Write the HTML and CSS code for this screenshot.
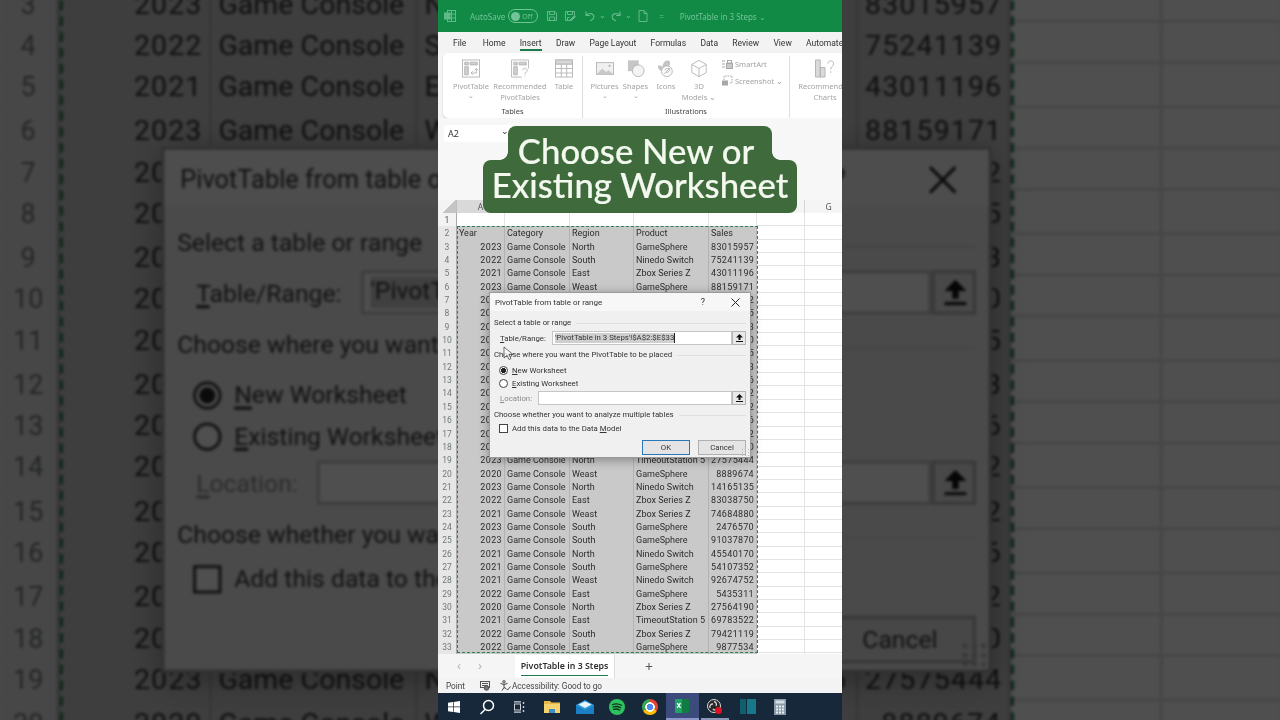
FILE: index.html
```html
<!DOCTYPE html>
<html lang="en">
<head>
  <meta charset="UTF-8">
  <title>PivotTable in 3 Steps</title>
  <link rel="stylesheet" href="styles.css">
  <script src="script.js" defer></script>
</head>
<body>
  <!-- zoomed, darkened copy of the window, filled in by script.js -->
  <div class="backdrop" aria-hidden="true"></div>

  <div class="stage">
    <div class="excel">
      <!-- title bar -->
      <div class="titlebar">
        <svg class="tb-logo" width="14" height="14" viewBox="0 0 14 14" fill="none" stroke="#62b98a"><rect x="4.5" y="1.5" width="8" height="11"/><path d="M4.5 5h8M4.5 9h8M8.500 1.500v11"/><rect x="1" y="3.500" width="6.500" height="7" fill="#62b98a" stroke="none"/></svg>
        <span class="autosave">AutoSave</span>
        <span class="toggle"><i></i>Off</span>
        <svg class="tb-save" width="12" height="12" viewBox="0 0 12 12" fill="none" stroke="#62b98a"><path d="M1.500 1.500h7.500l1.500 1.500v7.500h-9z"/><path d="M3.500 1.500v3h5v-3M3.500 10.500v-3.500h5v3.500"/></svg>
        <svg class="tb-saveas" width="12" height="12" viewBox="0 0 12 12" fill="none" stroke="#62b98a"><path d="M1.500 1.500h9v5l-4 4h-5z"/><path d="M3.500 1.500v3h5v-3M3.500 10.500v-3h2M6 10l4.500-4.500 1 1-4 4z"/></svg>
        <svg class="tb-undo" width="12" height="12" viewBox="0 0 12 12" fill="none" stroke="#62b98a" stroke-width="1.200"><path d="M2 1.500v4h4M2.300 5.300c2-2.800 7.500-2.300 7.500 1.500 0 2-1.500 3.200-3.800 4"/></svg>
        <span class="tb-caret">⌄</span>
        <svg class="tb-redo" width="12" height="12" viewBox="0 0 12 12" fill="none" stroke="#62b98a" stroke-width="1.200"><path d="M10 1.500v4h-4M9.700 5.300c-2-2.800-7.500-2.300-7.500 1.500 0 2 1.500 3.200 3.800 4"/></svg>
        <span class="tb-caret">⌄</span>
        <svg class="tb-new" width="10" height="12" viewBox="0 0 10 12" fill="none" stroke="#62b98a"><path d="M1 .5h5l3 3v8h-8zM6 .5v3h3"/></svg>
        <span class="tb-more">=</span>
        <span class="docname">PivotTable in 3 Steps ⌄</span>
      </div>

      <!-- ribbon tabs -->
      <nav class="tabs">
        <span class="tab-file">File</span><span>Home</span><span class="tab-on">Insert</span><span>Draw</span><span>Page Layout</span><span>Formulas</span><span>Data</span><span>Review</span><span>View</span><span>Automate</span>
      </nav>

      <!-- ribbon -->
      <div class="ribbon">
        <div class="rb-group rb-tables">
          <div class="rb-items">
            <div class="rb-item w56">
              <svg width="18" height="19" viewBox="0 0 20 20" fill="none" stroke="#b4b4b4"><rect x=".5" y=".5" width="19" height="19"/><path d="M3 3h4v3H3zM9 3h8v3H9zM3 8h4v9H3z" fill="#cfcfcf"/><path d="M10 15h6v-5M14 12l2-2 2 2M12 13l-2 2 2 2"/></svg>
              <span>PivotTable</span><span class="rb-down">⌄</span>
            </div>
            <div class="rb-item w42">
              <svg width="18" height="19" viewBox="0 0 20 20" fill="none" stroke="#b4b4b4"><path d="M19.500 10V.5H.5v19H12"/><path d="M3 3h4v3H3zM9 3h8v3H9zM3 8h4v9H3z" fill="#cfcfcf"/><path d="M13 12c0-3 5-3 5 0 0 2-2.500 2-2.500 4.500M15.500 18v1"/></svg>
              <span>Recommended</span><span>PivotTables</span>
            </div>
            <div class="rb-item w46">
              <svg width="18" height="19" viewBox="0 0 20 20" fill="none" stroke="#b4b4b4"><rect x=".5" y=".5" width="19" height="19"/><path d="M.5 5h19M.5 10h19M.5 15h19M7 .5v19M13 .5v19"/><path d="M.5.5h19V5H.5z" fill="#d6d6d6"/></svg>
              <span>Table</span>
            </div>
          </div>
          <div class="rb-label">Tables</div>
        </div>
        <div class="rb-group rb-illus">
          <div class="rb-items">
            <div class="rb-item w31">
              <svg width="18" height="19" viewBox="0 0 20 20" fill="none" stroke="#b4b4b4"><rect x=".5" y="3.500" width="19" height="13" fill="#f0f0f0"/><path d="M1 16l6-6 4 4 3-2 5 4z" fill="#c9c9c9" stroke="none"/><circle cx="15" cy="7" r="1.200" fill="#b4b4b4" stroke="none"/></svg>
              <span>Pictures</span><span class="rb-down">⌄</span>
            </div>
            <div class="rb-item w31">
              <svg width="18" height="19" viewBox="0 0 20 20"><rect x="1" y="1" width="12" height="12" fill="#c6c6c6"/><circle cx="12.500" cy="12.500" r="6.500" fill="#f4f4f4" stroke="#b4b4b4"/></svg>
              <span>Shapes</span><span class="rb-down">⌄</span>
            </div>
            <div class="rb-item w28">
              <svg width="18" height="19" viewBox="0 0 20 20"><path d="M1 7c2-1 4 0 5 1 1-4 2-7 6-7 3 0 3 3 2 5-1 2-1 3 2 3-3 2-5 4-9 4-4 0-6-2-6-6z" fill="#c4c4c4"/><circle cx="11" cy="13" r="6" fill="#fafafa" stroke="#b4b4b4"/><path d="M8 16l6-6M9 12c0-2 2-2 5-2 0 3-1 5-4 4" fill="none" stroke="#b4b4b4"/></svg>
              <span>Icons</span>
            </div>
            <div class="rb-item w38">
              <svg width="18" height="19" viewBox="0 0 20 20" fill="none" stroke="#b4b4b4"><path d="M10 1l8 4.500v9L10 19l-8-4.500v-9zM2 5.500l8 4.500 8-4.500M10 10v9"/></svg>
              <span>3D</span><span>Models ⌄</span>
            </div>
            <div class="rb-side">
              <span class="rb-line"><svg width="11" height="9" viewBox="0 0 11 9" fill="none" stroke="#a8a8a8"><path d="M0 1h3M0 4h3M0 7h3"/><rect x="4.500" y="3.500" width="6" height="5" fill="#c9c9c9"/><rect x="5.500" y=".5" width="4" height="2.500"/></svg>SmartArt</span>
              <span class="rb-line"><svg width="11" height="11" viewBox="0 0 11 11" fill="none" stroke="#a8a8a8"><path d="M2 5V1h8v7H8" stroke-dasharray="1.500 1"/><rect x=".5" y="6" width="5" height="4" fill="#a8a8a8"/></svg>Screenshot ⌄</span>
            </div>
          </div>
          <div class="rb-label">Illustrations</div>
        </div>
        <div class="rb-group rb-charts">
          <div class="rb-items">
            <div class="rb-item w60">
              <svg width="22" height="19" viewBox="0 0 22 20" fill="none" stroke="#b4b4b4"><path d="M1 1h5v18H1zM6 9h5v10H6z" fill="#dadada"/><path d="M14 5c0-4 6-4 6 0 0 3-3 3-3 6M17 13v1.500"/></svg>
              <span>Recommended</span><span>Charts</span>
            </div>
          </div>
        </div>
      </div>

      <!-- name box -->
      <div class="formula">
        <div class="namebox">A2<span>⌄</span></div>
      </div>

      <!-- sheet -->
      <div class="colheads">
        <span class="corner"></span><span>A</span><span>B</span><span>C</span><span>D</span><span>E</span><span class="col-off"></span><span class="col-off">G</span>
      </div>
      <div class="sheet">
        <div class="row row-blank"><b>1</b><span></span><span></span><span></span><span></span><span></span></div>
        <div class="row"><b>2</b><span>Year</span><span>Category</span><span>Region</span><span>Product</span><span>Sales</span></div>
        <div class="row"><b>3</b><span class="num">2023</span><span>Game Console</span><span>North</span><span>GameSphere</span><span class="num">83015957</span></div>
        <div class="row"><b>4</b><span class="num">2022</span><span>Game Console</span><span>South</span><span>Ninedo Switch</span><span class="num">75241139</span></div>
        <div class="row"><b>5</b><span class="num">2021</span><span>Game Console</span><span>East</span><span>Zbox Series Z</span><span class="num">43011196</span></div>
        <div class="row"><b>6</b><span class="num">2023</span><span>Game Console</span><span>Weast</span><span>GameSphere</span><span class="num">88159171</span></div>
        <div class="row"><b>7</b><span class="num">2021</span><span>Game Console</span><span>North</span><span>GameSphere</span><span class="num">61320472</span></div>
        <div class="row"><b>8</b><span class="num">2022</span><span>Game Console</span><span>East</span><span>Zbox Series Z</span><span class="num">39471825</span></div>
        <div class="row"><b>9</b><span class="num">2020</span><span>Game Console</span><span>South</span><span>Ninedo Switch</span><span class="num">50218463</span></div>
        <div class="row"><b>10</b><span class="num">2023</span><span>Game Console</span><span>Weast</span><span>GameSphere</span><span class="num">72660310</span></div>
        <div class="row"><b>11</b><span class="num">2021</span><span>Game Console</span><span>East</span><span>Zbox Series Z</span><span class="num">18835275</span></div>
        <div class="row"><b>12</b><span class="num">2022</span><span>Game Console</span><span>North</span><span>Ninedo Switch</span><span class="num">64120983</span></div>
        <div class="row"><b>13</b><span class="num">2020</span><span>Game Console</span><span>South</span><span>GameSphere</span><span class="num">29574416</span></div>
        <div class="row"><b>14</b><span class="num">2023</span><span>Game Console</span><span>East</span><span>Zbox Series Z</span><span class="num">83301752</span></div>
        <div class="row"><b>15</b><span class="num">2021</span><span>Game Console</span><span>Weast</span><span>GameSphere</span><span class="num">47096132</span></div>
        <div class="row"><b>16</b><span class="num">2022</span><span>Game Console</span><span>North</span><span>Ninedo Switch</span><span class="num">35718846</span></div>
        <div class="row"><b>17</b><span class="num">2020</span><span>Game Console</span><span>South</span><span>GameSphere</span><span class="num">90246612</span></div>
        <div class="row"><b>18</b><span class="num">2021</span><span>Game Console</span><span>East</span><span>Zbox Series Z</span><span class="num">56831470</span></div>
        <div class="row"><b>19</b><span class="num">2023</span><span>Game Console</span><span>North</span><span>TimeoutStation 5</span><span class="num">27575444</span></div>
        <div class="row"><b>20</b><span class="num">2020</span><span>Game Console</span><span>Weast</span><span>GameSphere</span><span class="num">8889674</span></div>
        <div class="row"><b>21</b><span class="num">2023</span><span>Game Console</span><span>North</span><span>Ninedo Switch</span><span class="num">14165135</span></div>
        <div class="row"><b>22</b><span class="num">2022</span><span>Game Console</span><span>East</span><span>Zbox Series Z</span><span class="num">83038750</span></div>
        <div class="row"><b>23</b><span class="num">2021</span><span>Game Console</span><span>Weast</span><span>Zbox Series Z</span><span class="num">74684880</span></div>
        <div class="row"><b>24</b><span class="num">2023</span><span>Game Console</span><span>South</span><span>GameSphere</span><span class="num">2476570</span></div>
        <div class="row"><b>25</b><span class="num">2023</span><span>Game Console</span><span>South</span><span>GameSphere</span><span class="num">91037870</span></div>
        <div class="row"><b>26</b><span class="num">2021</span><span>Game Console</span><span>North</span><span>Ninedo Switch</span><span class="num">45540170</span></div>
        <div class="row"><b>27</b><span class="num">2021</span><span>Game Console</span><span>South</span><span>GameSphere</span><span class="num">54107352</span></div>
        <div class="row"><b>28</b><span class="num">2021</span><span>Game Console</span><span>Weast</span><span>Ninedo Switch</span><span class="num">92674752</span></div>
        <div class="row"><b>29</b><span class="num">2022</span><span>Game Console</span><span>East</span><span>GameSphere</span><span class="num">5435311</span></div>
        <div class="row"><b>30</b><span class="num">2020</span><span>Game Console</span><span>North</span><span>Zbox Series Z</span><span class="num">27564190</span></div>
        <div class="row"><b>31</b><span class="num">2021</span><span>Game Console</span><span>East</span><span>TimeoutStation 5</span><span class="num">69783522</span></div>
        <div class="row"><b>32</b><span class="num">2022</span><span>Game Console</span><span>South</span><span>Zbox Series Z</span><span class="num">79421119</span></div>
        <div class="row"><b>33</b><span class="num">2022</span><span>Game Console</span><span>East</span><span>GameSphere</span><span class="num">9877534</span></div>
        <div class="ants"></div>
      </div>

      <!-- sheet tabs and status -->
      <div class="sheetbar">
        <span class="arrow arrow-l">‹</span><span class="arrow arrow-r">›</span>
        <div class="sheet-tab"><span>PivotTable in 3 Steps</span></div>
        <span class="plus">+</span>
      </div>
      <div class="status">
        <span class="status-mode">Point</span>
        <svg class="status-macro" width="10" height="10" viewBox="0 0 10 10" fill="none" stroke="#555"><rect x=".5" y=".5" width="9" height="6"/><path d="M2 2.500h6M2 4.500h6"/><circle cx="6.500" cy="7" r="2.300" fill="#777"/></svg>
        <svg class="status-acc" width="11" height="11" viewBox="0 0 11 11" fill="none" stroke="#444"><circle cx="4" cy="1.800" r="1.200"/><path d="M.5 3.500l3.500 1 3.500-1M4 4.500v3l-2 3M4 7.500l2 1"/><path d="M6 8.500l1.500 1.500 3-3.500"/></svg>
        <span>Accessibility: Good to go</span>
      </div>

      <!-- windows taskbar -->
      <div class="taskbar">
        <span class="task"><svg width="12" height="12" viewBox="0 0 12 12" fill="#fff"><path d="M0 1.700l5-.7v4.600H0zM5.700.9L12 0v5.600H5.700zM0 6.300h5v4.700l-5-.7zM5.700 6.300H12V12l-6.300-.9z"/></svg></span>
        <span class="task"><svg width="16" height="16" viewBox="0 0 16 16" fill="none" stroke="#fff" stroke-width="1.500"><circle cx="9.500" cy="6.500" r="5"/><path d="M6 10.500L1.500 15"/></svg></span>
        <span class="task"><svg width="12" height="12" viewBox="0 0 12 12" fill="none" stroke="#c9d0d6"><rect x="1.500" y="3" width="6" height="6"/><path d="M1 .8h7M1 11.200h7" stroke-width="1.200"/><path d="M10.500 1v2M10.500 5v2M10.500 9v2" stroke-width="1.400"/></svg></span>
        <span class="task"><svg width="16" height="14" viewBox="0 0 16 14"><path d="M0 1h6l1.500 1.500H16V13H0z" fill="#e8b84b"/><rect y="4" width="16" height="9" fill="#f4d36f"/><rect x="5" y="9" width="6" height="4" fill="#3e8fc9"/></svg></span>
        <span class="task"><svg width="18" height="14" viewBox="0 0 18 14"><path d="M0 5L9 0l9 5v9H0z" fill="#2f9be0"/><path d="M0 5l9 5 9-5v9H0z" fill="#1c7fc4"/><path d="M2.500 4.500L9 1.500l6.500 3L9 8z" fill="#e9f5fc"/></svg></span>
        <span class="task"><svg width="16" height="16" viewBox="0 0 16 16"><circle cx="8" cy="8" r="8" fill="#2ec15f"/><path d="M3.500 5.500c3-1 6.500-.7 9 .8M4 8c2.500-.8 5.500-.5 7.700.7M4.500 10.400c2-.6 4.500-.4 6.300.6" fill="none" stroke="#12301d" stroke-width="1.300" stroke-linecap="round"/></svg></span>
        <span class="task"><span class="chrome"></span></span>
        <span class="task task-active"><span class="xl"><span>x</span></span></span>
        <span class="task task-open"><svg width="16" height="16" viewBox="0 0 16 16"><circle cx="7" cy="7" r="6.500" fill="#26282c" stroke="#d8d8d8"/><path d="M7 2.500a3 3 0 0 1 2 4.500M3 9a3 3 0 0 1 3-4M11 9.500a3 3 0 0 1-5 .5" fill="none" stroke="#d8d8d8" stroke-width="1.300"/><circle cx="11.500" cy="11.500" r="3.500" fill="#e0121f"/></svg></span>
        <span class="task"><svg width="16" height="15" viewBox="0 0 16 15"><rect width="6" height="15" fill="#0f5f6e"/><rect x="7" width="9" height="15" fill="#17788a"/></svg></span>
        <span class="task"><svg width="12" height="16" viewBox="0 0 12 16"><rect width="12" height="16" fill="#8a9aa6"/><rect x="1.500" y="1.500" width="9" height="3" fill="#d0dde6"/><path d="M2 6.500h2v2H2zM5 6.500h2v2H5zM8 6.500h2v2H8zM2 9.500h2v2H2zM5 9.500h2v2H5zM8 9.500h2v2H8zM2 12.500h2v2H2zM5 12.500h2v2H5zM8 12.500h2v2H8z" fill="#e8eef2"/></svg></span>
      </div>

      <!-- dialog -->
      <div class="dialog">
        <div class="dlg-title">
          <span>PivotTable from table or range</span>
          <span class="dlg-help">?</span>
          <svg width="9" height="9" viewBox="0 0 9 9" stroke="#222" fill="none"><path d="M.5.500l8 8M8.500.500l-8 8"/></svg>
        </div>
        <div class="dlg-body">
          <div class="dlg-head">Select a table or range</div>
          <div class="dlg-field">
            <label class="lbl-range"><u>T</u>able/Range:</label>
            <div class="dlg-input"><span class="picked">'PivotTable in 3 Steps'!$A$2:$E$33</span></div>
            <span class="dlg-pick"><svg width="7" height="8" viewBox="0 0 7 8" fill="#111"><path d="M3.500 0L7 3.500H4.500V6h-2V3.500H0zM0 7h7v1H0z"/></svg></span>
          </div>
          <div class="dlg-head dlg-head-2">Choose where you want the PivotTable to be placed</div>
          <div class="dlg-opt"><span class="radio radio-on"></span><span><u>N</u>ew Worksheet</span></div>
          <div class="dlg-opt"><span class="radio"></span><span><u>E</u>xisting Worksheet</span></div>
          <div class="dlg-field dlg-field-loc">
            <label class="lbl-loc"><u>L</u>ocation:</label>
            <div class="dlg-input"></div>
            <span class="dlg-pick"><svg width="7" height="8" viewBox="0 0 7 8" fill="#111"><path d="M3.500 0L7 3.500H4.500V6h-2V3.500H0zM0 7h7v1H0z"/></svg></span>
          </div>
          <div class="dlg-head dlg-head-3">Choose whether you want to analyze multiple tables</div>
          <div class="dlg-opt dlg-opt-check"><span class="check"></span><span>Add this data to the Data <u>M</u>odel</span></div>
          <div class="dlg-btns">
            <span class="btn btn-ok">OK</span>
            <span class="btn">Cancel</span>
          </div>
        </div>
      </div>

      <svg class="cursor" width="11" height="15" viewBox="0 0 11 15"><path d="M1 1v11l3-2.500 2 4 2-1-2-4h4z" fill="#fff" fill-opacity=".75" stroke="#333" stroke-width=".7"/></svg>

      <!-- video caption -->
      <div class="caption">
        <span class="cap-line cap-top">Choose New or</span>
        <span class="cap-line cap-bottom">Existing Worksheet</span>
      </div>
    </div>
  </div>
</body>
</html>
```

FILE: styles.css
```css
* {
  box-sizing: border-box;
}
html, body {
  height: 100%;
  overflow: hidden;
}
body {
  margin: 0;
  background: #4b4b4b;
  position: relative;
  font-family: 'Noto Sans', Arial, sans-serif;
  color: #333;
}
.stage {
  display: flex;
  justify-content: center;
  height: 720px;
}
.backdrop {
  position: absolute;
  left: 0;
  top: 0;
  width: 1280px;
  height: 720px;
  overflow: hidden;
}
.backdrop .excel {
  position: absolute;
  left: 438px;
  top: 0;
  transform-origin: 50% 0;
  transform: translateY(-779px) scale(3.17);
  filter: brightness(.31) blur(.5px);
}
/* only rows 3 to 20 of the copy are in view */
.backdrop .caption,
.backdrop .cursor,
.backdrop .titlebar > *,
.backdrop .tabs,
.backdrop .ribbon,
.backdrop .namebox,
.backdrop .colheads,
.backdrop .sheetbar > *,
.backdrop .status > *,
.backdrop .taskbar,
.backdrop .row:nth-child(-n+2),
.backdrop .row:nth-child(n+21) {
  visibility: hidden;
}
.excel {
  position: relative;
  flex: none;
  width: 404px;
  height: 720px;
  display: flex;
  flex-direction: column;
  overflow: hidden;
  background: #f5f5f5;
  filter: blur(.3px);
}

/* title bar */
.titlebar {
  flex: none;
  height: 32px;
  background: #118a45;
  color: #72c497;
  font-size: 8px;
  display: flex;
  align-items: center;
  padding-left: 5px;
}
.autosave {
  margin-left: 13px;
}
.toggle {
  width: 30px;
  height: 14px;
  margin-left: 3px;
  border: 1px solid #72c497;
  border-radius: 7px;
  display: flex;
  align-items: center;
  gap: 2px;
  padding-left: 2px;
  font-size: 7px;
}
.toggle i {
  width: 9px;
  height: 9px;
  border-radius: 50%;
  background: #72c497;
}
.tb-save {
  margin-left: 8px;
}
.tb-saveas {
  margin-left: 6px;
}
.tb-undo {
  margin-left: 8px;
}
.tb-caret {
  width: 14px;
  padding-left: 3px;
  margin-top: -4px;
}
.tb-new {
  margin-left: 2px;
}
.tb-more {
  margin-left: 11px;
}
.docname {
  margin-left: 16px;
}

/* tabs */
.tabs {
  flex: none;
  height: 21px;
  display: flex;
  align-items: center;
  gap: 14.300px;
  padding-left: 15px;
  background: #f3f3f3;
  font-family: Roboto, Arial, sans-serif;
  font-size: 8.500px;
  white-space: nowrap;
}
.tab-file {
  margin-right: 2px;
}
.tab-on {
  position: relative;
}
.tab-on::after {
  content: "";
  position: absolute;
  left: 0;
  right: 0;
  bottom: -3px;
  height: 1.500px;
  background: #1b7a4b;
}

/* ribbon */
.ribbon {
  flex: none;
  height: 65px;
  margin: 0 0 0 5px;
  background: #fff;
  border-radius: 5px 0 0 5px;
  box-shadow: 0 1px 2px rgba(0, 0, 0, .18);
  display: flex;
  font-size: 7.500px;
  color: #a3a3a3;
  white-space: nowrap;
}
.rb-group {
  flex: none;
  display: flex;
  flex-direction: column;
  border-right: 1px solid #dedede;
  margin: 3px 0 0;
}
.rb-tables {
  width: 140px;
}
.rb-illus {
  width: 207px;
}
.rb-charts {
  border: 0;
}
.rb-items {
  flex: 1;
  display: flex;
}
.rb-item {
  flex: none;
  display: flex;
  flex-direction: column;
  align-items: center;
  line-height: 10.500px;
  padding-top: 3px;
}
.rb-item svg {
  margin-bottom: 3px;
  flex: none;
}
.w56 { width: 56px; }
.w42 { width: 42px; }
.w46 { width: 46px; }
.w31 { width: 31px; }
.w28 { width: 30px; }
.w38 { width: 36px; }
.w60 { width: 70px; }
.rb-illus .rb-items {
  padding-left: 6px;
}
.rb-down {
  font-size: 7px;
  line-height: 7px;
}
.rb-side {
  display: flex;
  flex-direction: column;
  gap: 6px;
  padding: 3px 0 0 5px;
}
.rb-line {
  display: flex;
  align-items: center;
  gap: 2px;
}
.rb-label {
  text-align: center;
  color: #444;
  font-size: 7.500px;
  line-height: 10px;
  height: 10px;
  margin-bottom: 2px;
}

/* formula area */
.formula {
  flex: none;
  height: 82px;
  padding: 7px 0 0 6px;
  background: #f7f7f7;
}
.namebox {
  width: 70px;
  height: 17px;
  background: #fff;
  border-radius: 3px;
  font-size: 9px;
  line-height: 17px;
  padding-left: 4px;
  display: flex;
  justify-content: space-between;
}
.namebox span {
  padding-right: 5px;
  margin-top: -3px;
}

/* sheet */
.colheads,
.row {
  display: grid;
  grid-template-columns: 19px 48px 65px 64px 75px 48px 48px 48px;
}
.colheads {
  flex: none;
  height: 13px;
  font-size: 8.500px;
  line-height: 13px;
  text-align: center;
  color: #555;
}
.colheads span {
  background: #d9d9d9;
  border-right: 1px solid #bdbdbd;
  border-bottom: 1px solid #888;
}
.colheads .corner {
  background: linear-gradient(135deg, #f3f3f3 55%, #c4c4c4 55%);
  border-bottom-color: #ccc;
}
.colheads .col-off {
  background: #f5f5f5;
  border-bottom-color: #d5d5d5;
  border-right-color: #d5d5d5;
}
.sheet {
  position: relative;
  flex: none;
  height: 441px;
  background: #fff;
  font-family: Roboto, Arial, sans-serif;
  font-size: 9px;
  color: #2c2c2c;
}
.row {
  height: 13.350px;
  line-height: 14px;
  white-space: nowrap;
  background: linear-gradient(#e3e3e3, #e3e3e3) bottom / 100% 1px no-repeat;
}
.row b {
  font-weight: 400;
  text-align: center;
  font-size: 8.500px;
  color: #6f7a72;
  background: #e6e6e6;
  border-right: 1px solid #aaa;
  border-bottom: 1px solid #d0d0d0;
}
.row span {
  background: #c9c9c9;
  border-right: 1px solid #b3b3b3;
  border-bottom: 1px solid #b3b3b3;
  padding: 0 2px;
  overflow: hidden;
}
.row .num {
  text-align: right;
  letter-spacing: .35px;
}
.row::after {
  content: "";
  border-right: 1px solid #e3e3e3;
}
.row-blank b {
  background: #f3f3f3;
  color: #555;
}
.row-blank span {
  background: #fff;
  border-color: #e3e3e3;
}
.ants {
  position: absolute;
  left: 19px;
  top: 13.350px;
  width: 301px;
  height: 427px;
  border: 1.500px dashed #2f7d52;
}

/* bottom bars */
.sheetbar {
  flex: none;
  height: 24px;
  background: #f5f5f5;
  display: flex;
  align-items: center;
  position: relative;
}
.arrow {
  color: #b5b5b5;
  font-size: 13px;
  margin-top: -2px;
}
.arrow-l {
  margin-left: 19px;
}
.arrow-r {
  margin-left: 17px;
}
.sheet-tab {
  margin-left: 33px;
  height: 23px;
  width: 100px;
  background: #fff;
  font-size: 8.800px;
  font-weight: 600;
  color: #2d2d2d;
  text-align: center;
  line-height: 22px;
  border-right: 1px solid #ddd;
  white-space: nowrap;
}
.sheet-tab span {
  display: inline-block;
  height: 21px;
  border-bottom: 1.500px solid #1f7a4d;
}
.plus {
  margin-left: 30px;
  font-size: 14px;
  color: #555;
}
.status {
  flex: none;
  height: 15px;
  background: #f3f3f3;
  display: flex;
  align-items: center;
  font-family: Roboto, Arial, sans-serif;
  font-size: 8.200px;
  color: #444;
  padding-left: 8px;
}
.status-macro {
  margin-left: 15px;
}
.status-acc {
  margin: 0 1px 0 10px;
}
.taskbar {
  flex: none;
  height: 27px;
  background: #17283a;
  display: flex;
}
.task {
  width: 32.600px;
  display: flex;
  align-items: center;
  justify-content: center;
}
.task-active {
  background: #3d4a7c;
  border-bottom: 2px solid #8c96c8;
}
.task-open {
  position: relative;
}
.task-open::after {
  content: "";
  position: absolute;
  left: 2px;
  right: 2px;
  bottom: 0;
  height: 2px;
  background: #8c96b8;
}
.chrome {
  width: 16px;
  height: 16px;
  border-radius: 50%;
  background: radial-gradient(circle, #4a8cf0 0 3px, #fff 3.500px 4.500px, transparent 5px), conic-gradient(#ea4335 0 33%, #fbbc05 33% 66%, #34a853 66%);
}
.xl {
  width: 14px;
  height: 14px;
  background: linear-gradient(90deg, #21a366 50%, #107c41 50%);
  border-radius: 1px;
  position: relative;
  color: #fff;
  font-size: 8px;
  line-height: 12px;
  font-weight: 700;
  padding-left: 1px;
}

/* dialog */
.dialog {
  position: absolute;
  left: 51px;
  top: 292px;
  width: 262px;
  height: 166px;
  background: #f0f0f0;
  border: 1px solid #9a9a9a;
  box-shadow: 0 2px 10px rgba(0, 0, 0, .35);
  font-family: Roboto, Arial, sans-serif;
  font-size: 7.800px;
  color: #333;
  white-space: nowrap;
}
.dialog::after {
  content: "";
  position: absolute;
  right: 1px;
  bottom: 1px;
  width: 8px;
  height: 8px;
  background: radial-gradient(circle, #b5b5b5 .7px, transparent 1px) 0 0 / 3px 3px;
}
.dlg-title {
  height: 18px;
  display: flex;
  align-items: center;
  padding: 0 10px 0 5px;
  background: #f7f7f7;
  font-size: 8px;
}
.dlg-title span:first-child {
  flex: 1;
}
.dlg-help {
  margin-right: 26px;
  font-size: 9px;
}
.dlg-body {
  padding: 5px 4px 0 4px;
}
.dlg-head {
  height: 14px;
  line-height: 14px;
  display: flex;
  align-items: center;
  gap: 5px;
}
.dlg-head::after {
  content: "";
  flex: 1;
  height: 1px;
  background: #e0e0e0;
}
.dlg-field {
  display: flex;
  align-items: center;
  height: 14px;
  margin: 1px 0 0 6px;
}
.dlg-field label {
  flex: none;
}
.lbl-range {
  width: 52px;
}
.lbl-loc {
  width: 38px;
  color: #8a8a8a;
}
.dlg-input {
  flex: 1;
  height: 14px;
  background: #fff;
  border: 1px solid #c5c5c5;
  padding: 0 2px;
  line-height: 12px;
}
.picked {
  display: inline-block;
  height: 10px;
  line-height: 10px;
  background: #cfcfcf;
  border-right: 1px solid #222;
}
.dlg-pick {
  flex: none;
  width: 14px;
  height: 14px;
  border: 1px solid #b5b5b5;
  background: #e8e8e8;
  display: flex;
  align-items: center;
  justify-content: center;
}
.dlg-head-2 {
  margin: 3px 0 2px;
}
.dlg-opt {
  height: 13px;
  display: flex;
  align-items: center;
  gap: 4px;
  margin-left: 5px;
}
.radio {
  width: 9px;
  height: 9px;
  border: 1px solid #444;
  border-radius: 50%;
  background: #fff;
}
.radio-on {
  background: radial-gradient(circle, #222 0 2.300px, #fff 2.800px);
}
.check {
  width: 9px;
  height: 9px;
  border: 1px solid #444;
  background: #fff;
}
.dlg-field-loc {
  margin-top: 1px;
}
.dlg-head-3 {
  margin-top: 3px;
}
.dlg-btns {
  display: flex;
  justify-content: flex-end;
  gap: 8px;
  margin-top: 5px;
}
.btn {
  width: 48px;
  height: 15px;
  background: #e4e4e4;
  border: 1px solid #b0b0b0;
  text-align: center;
  line-height: 13px;
}
.btn-ok {
  border: 1.500px solid #2b77b5;
}
.cursor {
  position: absolute;
  left: 65px;
  top: 346px;
}

/* caption over the video */
.caption {
  position: absolute;
  left: 45px;
  top: 126px;
  width: 314px;
  display: flex;
  flex-direction: column;
  align-items: center;
  font-family: Lato, Arial, sans-serif;
  font-weight: 500;
  font-size: 34.700px;
  line-height: 34px;
  -webkit-text-stroke: .2px #f3f9ee;
  color: #f3f9ee;
  white-space: nowrap;
}
.cap-line {
  background: #3f6a3c;
  text-align: center;
}
.cap-top {
  position: relative;
  z-index: 1;
  width: 264px;
  height: 34px;
  padding: 8px 8px 0 0;
  border-radius: 8px 8px 0 0;
}
/* inward curves where the two lines meet */
.cap-top::before,
.cap-top::after {
  content: "";
  position: absolute;
  bottom: 0;
  width: 8px;
  height: 8px;
}
.cap-top::before {
  left: -8px;
  background: radial-gradient(circle at 0 0, transparent 7.500px, #3f6a3c 8px);
}
.cap-top::after {
  right: -8px;
  background: radial-gradient(circle at 100% 0, transparent 7.500px, #3f6a3c 8px);
}
.cap-bottom {
  width: 314px;
  height: 53px;
  padding-top: 8px;
  border-radius: 8px;
}
```

FILE: script.js
```js
// the area beside the phone-shaped video is the same window, zoomed in
document.querySelector('.backdrop').appendChild(document.querySelector('.excel').cloneNode(true));
```
